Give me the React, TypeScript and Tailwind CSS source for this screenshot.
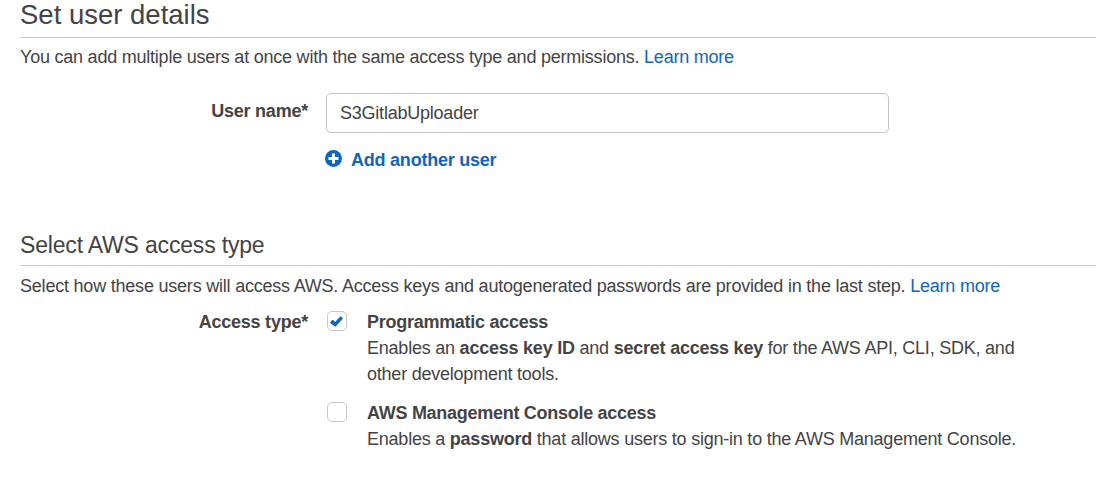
import React from "react";

function Check({ checked, label }: { checked: boolean; label: string }) {
  return (
    <span role="checkbox" aria-checked={checked} aria-label={label} className="flex size-5 shrink-0 items-center justify-center rounded-[5px] border border-[#c8c8c8] bg-white">
      {checked && (
        <svg viewBox="0 0 13 11" className="mr-px h-[11px] w-[13px]" fill="#1166bb">
          <path d="M.3 6 2.2 4.1Q2.7 3.7 3.2 4.1L5.1 5.9 10 .7Q10.5.2 11 .6L12.6 2Q13 2.5 12.6 3L5.9 10.2Q5.2 10.8 4.5 10.2L.3 6.9Q-.1 6.4.3 6Z" />
        </svg>
      )}
    </span>
  );
}

export default function App() {
  return (
    <main className="h-[487px] w-[1096px] overflow-hidden bg-white pl-5 font-['Liberation_Sans',Arial,sans-serif] text-[18px] leading-[26px] tracking-[-0.226px] whitespace-nowrap text-[#444444]">
      <h1 className="h-[38px] border-b border-[#cccccc] text-[27.5px] leading-[30px] tracking-normal">Set user details</h1>
      <p className="mt-[6px]">
        <span>You can add multiple users at once with the same access type and permissions.</span>{" "}
        <a className="text-[#1166bb]">Learn more</a>
      </p>
      <div className="mt-[23px] flex">
        <label className="w-[288px] pt-[5px] text-right font-bold">User name*</label>
        <div className="ml-[18px] flex h-10 w-[563px] items-center rounded-[5px] border border-[#c4c4c4] px-[13px]">S3GitlabUploader</div>
      </div>
      <div className="mt-[14px] ml-[305px] flex items-start font-bold text-[#1166bb]">
        <svg viewBox="0 0 17 17" className="mt-[3px] mr-[9px] size-[17px]">
          <circle cx="8.5" cy="8.5" r="8.5" fill="#1166bb" />
          <path d="M8.5 3.5v10M3.5 8.5h10" stroke="white" strokeWidth="3" />
        </svg>
        <span>Add another user</span>
      </div>
      <h2 className="mt-[57px] h-[36px] border-b border-[#cccccc] text-[23px] leading-[30px] tracking-[-0.18px]">Select AWS access type</h2>
      <p className="mt-[7px] tracking-[-0.213px]">
        <span>Select how these users will access AWS. Access keys and autogenerated passwords are provided in the last step.</span>{" "}
        <a className="text-[#1166bb]">Learn more</a>
      </p>
      <div className="mt-[10px] flex">
        <div className="w-[288px] text-right font-bold">Access type*</div>
        <div className="ml-[19px] flex flex-col gap-[13px]">
          <div className="flex gap-5">
            <div className="pt-[2px]"><Check checked label="Programmatic access" /></div>
            <div>
              <div className="font-bold tracking-[-0.27px]">Programmatic access</div>
              <div>Enables an <b>access key ID</b> and <b>secret access key</b> for the AWS API, CLI, SDK, and</div>
              <div>other development tools.</div>
            </div>
          </div>
          <div className="flex gap-5">
            <div className="pt-[2px]"><Check checked={false} label="AWS Management Console access" /></div>
            <div>
              <div className="font-bold tracking-[-0.28px]">AWS Management Console access</div>
              <div>Enables a <b>password</b> that allows users to sign-in to the AWS Management Console.</div>
            </div>
          </div>
        </div>
      </div>
    </main>
  );
}
